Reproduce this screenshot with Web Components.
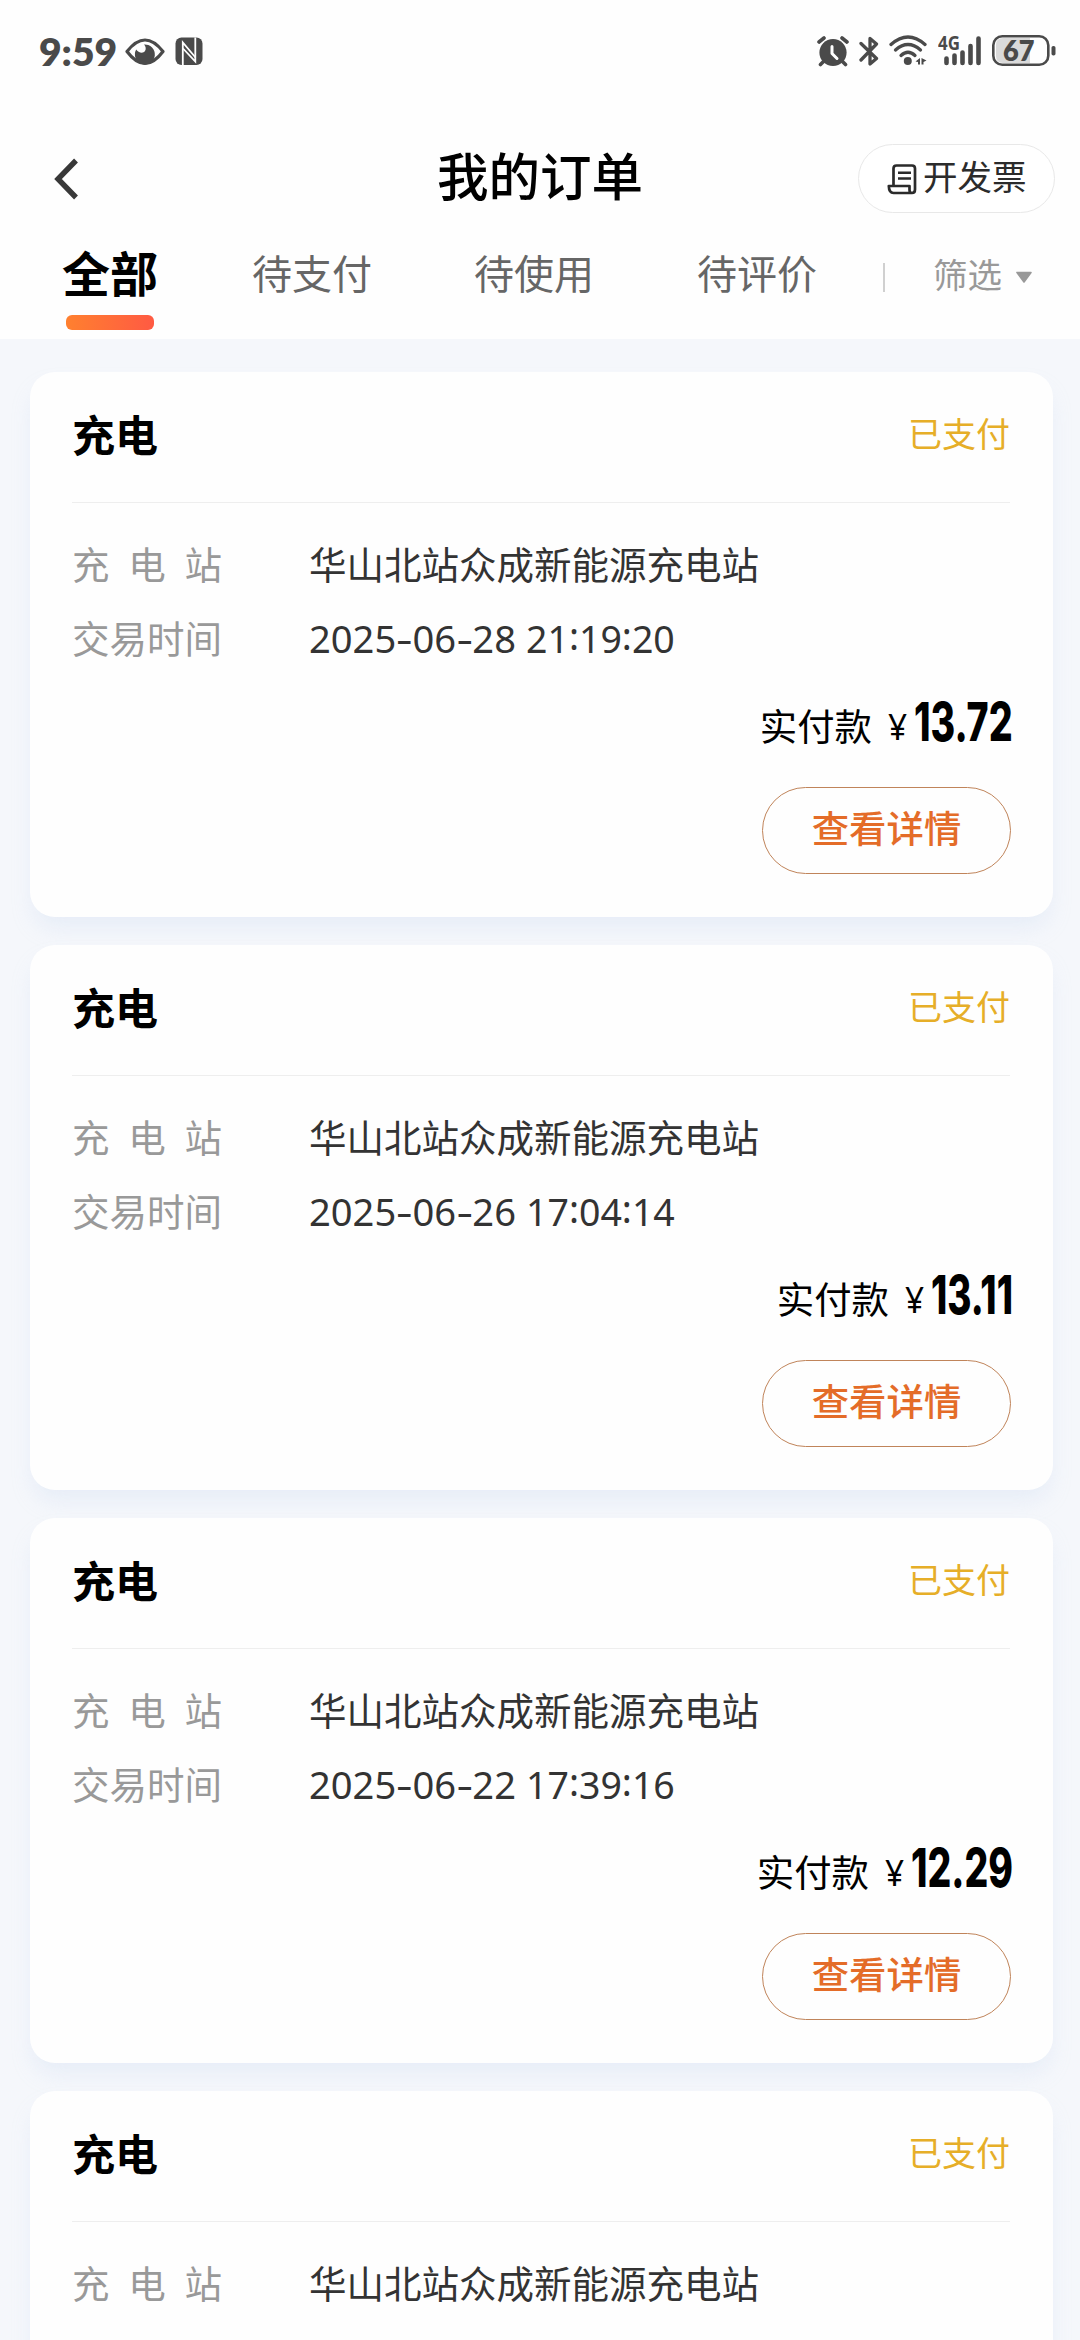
<!DOCTYPE html>
<html lang="zh-CN">
<head>
<meta charset="utf-8">
<title>我的订单</title>
<style>
html,body{margin:0;padding:0}
body{width:1080px;height:2340px;overflow:hidden;background:#f5f7fb;font-family:"Noto Sans","Noto Sans CJK SC",sans-serif}
</style>
</head>
<body>
<orders-page></orders-page>
<script>
const define = (name, html, setup) => {
  const t = document.createElement('template');
  t.innerHTML = html;
  customElements.define(name, class extends HTMLElement {
    connectedCallback() {
      if (this.shadowRoot) return;
      this.attachShadow({mode: 'open'}).append(t.content.cloneNode(true));
      if (setup) setup.call(this, this.shadowRoot);
    }
  });
};

/* Condenses or widens its text to the width given in the "w" attribute. */
define('fit-text', `
<style>:host{display:block;white-space:nowrap;flex:none}span{display:inline-block;transform-origin:0 50%}</style>
<span><slot></slot></span>`, function (root) {
  const span = root.querySelector('span'), w = +this.getAttribute('w');
  this.style.width = w + 'px';
  span.style.transform = `scaleX(${w / span.offsetWidth})`;
});

define('status-bar', `
<style>
:host{display:flex;height:100px;color:#4a4a4a;align-items:flex-start;box-sizing:border-box;padding:32px 23px 0 39px}
svg{display:block;flex:none}
.time{font:800 38px/38px Lato,sans-serif;height:38px}
.time b{font-weight:inherit;vertical-align:3px;line-height:1}
.eye{margin-left:8px}.nfc{margin-left:10px}
.right{margin-left:auto;display:flex}
.sig{display:grid}.sig>*{grid-area:1/1}
.g{font:700 20px/20px "Noto Sans",sans-serif;padding-top:1px}
.bat{display:grid}.bat>*{grid-area:1/1}
.num{font:800 28px/36px Lato,sans-serif;padding-left:12px}
</style>
<fit-text class="time" w="78">9:59</fit-text>
<svg class="eye" width="40" height="38" viewBox="0 0 40 38"><path d="M2 19.500Q20-3.500 38 19.500Q20 43.500 2 19.500Z" fill="none" stroke="currentColor" stroke-width="3.200" stroke-linejoin="round"/><path d="M19 12.500A10 10 0 1 1 11.200 17.500C13 20.500 18 22 20 19C21.500 16.500 20.500 14 19 12.500Z" fill="currentColor"/></svg>
<svg class="nfc" width="28" height="38" viewBox="0 0 28 38"><rect x=".5" y="5.500" width="27" height="27.500" rx="6" fill="currentColor"/><path d="M7.800 33V10.500L20.500 25.500" fill="none" stroke="#fff" stroke-width="1.800"/><path d="M20.300 5.500V29.500L8 16.500" fill="none" stroke="#fff" stroke-width="1.800"/></svg>
<div class="right">
<svg width="32" height="38" viewBox="0 0 32 38"><circle cx="16" cy="20.500" r="13.600" fill="currentColor"/><path d="M2 10L7 6M30 10L25 6M6.500 29.500L3.500 32.500M25.500 29.500L28.500 32.500" stroke="currentColor" stroke-width="3.600" stroke-linecap="round"/><path d="M15 14.500V21.500L20 26.500" fill="none" stroke="#fff" stroke-width="3" stroke-linecap="round" stroke-linejoin="round"/></svg>
<svg style="margin-left:10px" width="20" height="38" viewBox="0 0 20 38"><path d="M2 11.500L17.500 26.500L11 32V6.500L17.500 12L2 28" fill="none" stroke="currentColor" stroke-width="3.300" stroke-linecap="round" stroke-linejoin="round"/></svg>
<svg style="margin-left:10px" width="40" height="38" viewBox="0 0 40 38"><g fill="none" stroke="currentColor" stroke-width="3.300" stroke-linecap="round"><path d="M2 12.500Q19 -2.500 36 12.500"/><path d="M6.500 18Q19 7 31.500 18"/><path d="M12 23.500Q19 17 26 23.500"/></g><circle cx="18.800" cy="29" r="4" fill="currentColor"/><path d="M26.500 29.500L31 26V32.500H29V30ZM32.500 26L37.500 28.500L34.500 30V32.500H32.500Z" fill="currentColor"/></svg>
<div class="sig" style="margin-left:9px">
<svg width="44" height="38" viewBox="0 0 44 38"><path d="M8.500 26.500V31M16.500 23.500V31M24.500 20.500V31M32.500 14V31M40.500 6.500V31" stroke="currentColor" stroke-width="4.600" stroke-linecap="round"/></svg>
<fit-text class="g" w="22">4G</fit-text></div>
<div class="bat" style="margin-left:9px">
<svg width="66" height="38" viewBox="0 0 66 38"><path d="M12 6H39V31H12Q5 31 5 24V13Q5 6 12 6Z" fill="#dadada"/><rect x="2.300" y="4.300" width="55" height="28.500" rx="9" fill="none" stroke="currentColor" stroke-width="2.600"/><rect x="60.500" y="14" width="4" height="9.500" rx="1.800" fill="currentColor"/></svg>
<fit-text class="num" w="31">67</fit-text></div>
</div>`);

define('invoice-button', `
<style>
:host{display:flex;box-sizing:border-box;width:197px;height:69px;border:1px solid #e8e8e8;border-radius:35px;align-items:center;padding-left:28px;color:#2b2b2b;background:#fff;font-size:34.500px;line-height:50px}
svg{display:block;margin-right:6px}
span{display:block;margin-top:-4px}
</style>
<svg width="30" height="32" viewBox="0 0 30 32"><path d="M6.500 22V5.500Q6.500 2.500 9.500 2.500H25Q28 2.500 28 5.500V26.500Q28 30 25 30H6.500Q2 30 1.800 23H22.500V27Q22.500 30 25 30" fill="none" stroke="currentColor" stroke-width="2.700" stroke-linejoin="round"/><path d="M11 9.700H24M11 15.500H24" stroke="currentColor" stroke-width="2.500"/></svg>
<span><slot></slot></span>`);

define('title-bar', `
<style>
:host{display:grid;grid-template-columns:1fr auto 1fr;height:138px;align-items:start;padding:0 26px}
svg{display:block;margin:56px 0 0 26px}
h1{margin:36px 0 0;font-size:51.500px;font-weight:500;line-height:76px;color:#000;font-family:"Noto Sans CJK SC",sans-serif}
invoice-button{justify-self:end;margin:44px -1px 0 0}
</style>
<svg width="30" height="46" viewBox="0 0 30 46"><path d="M24 4.500L6 23L24 41.500" fill="none" stroke="#383838" stroke-width="5.400"/></svg>
<h1><slot></slot></h1>
<invoice-button>开发票</invoice-button>`);

define('tab-bar', `
<style>
:host{display:flex;height:101px;font-size:40px;line-height:60px;color:#666;box-sizing:border-box;padding-left:62px;font-family:"Noto Sans CJK SC",sans-serif}
div{display:flex;flex-direction:column;align-items:center}
.on{font-size:48px;font-weight:700;color:#000;line-height:72px}
.on span{margin-top:-3px}
i{display:block;width:88px;height:15px;border-radius:6px;background:linear-gradient(90deg,#ff802f,#ff5a43);margin-top:8px}
.t{padding-top:4px}
.sep{width:2px;height:29px;background:#d0d0d0;margin-top:25px}
.f{font-size:34.500px;color:#999;padding-top:5px}
svg{display:block;margin:33px 0 0 13px}
</style>
<div class="on"><span>全部</span><i></i></div>
<span class="t" style="margin-left:94px">待支付</span>
<span class="t" style="margin-left:102px">待使用</span>
<span class="t" style="margin-left:103px">待评价</span>
<span class="sep" style="margin-left:66px"></span>
<span class="f" style="margin-left:48px">筛选</span>
<svg width="18" height="13" viewBox="0 0 18 13"><path d="M2 1.500H16L9 11Z" fill="#999" stroke="#999" stroke-width="1.600" stroke-linejoin="round"/></svg>`);

define('info-row', `
<style>
:host{display:flex;height:74px;align-items:center;font-size:37.500px;line-height:56px;margin-top:-1px;margin-bottom:1px}
.l{width:150px;color:#999;display:flex;justify-content:space-between;margin-right:87px}
.v{color:#333;display:flex}
</style>
<div class="l"></div><div class="v"><slot></slot></div>`, function (root) {
  for (const c of this.getAttribute('label')) {
    const s = document.createElement('span');
    s.textContent = c;
    root.querySelector('.l').append(s);
  }
});

define('date-time', `
<style>
:host{display:flex;font:400 38.500px/56px "Noto Sans",sans-serif;gap:10px;margin-top:-2px}
b{font-weight:400;vertical-align:3px;line-height:1}
u{text-decoration:none;display:inline-block;transform:scaleX(1.350);margin:0 2px}
</style>
<fit-text class="d" w="207"></fit-text><fit-text class="t" w="149"></fit-text>`, function (root) {
  const [d, t] = this.getAttribute('value').split(' ');
  const fill = (sel, html) => {
    const old = root.querySelector(sel), el = document.createElement('fit-text');
    el.setAttribute('w', old.getAttribute('w'));
    el.innerHTML = html;
    old.replaceWith(el);
  };
  fill('.d', d.replace(/-/g, '<u>-</u>'));
  fill('.t', t.replace(/:/g, '<b>:</b>'));
});

define('pay-row', `
<style>
:host{display:flex;justify-content:flex-end;align-items:flex-start;height:110px;color:#000;font-size:37.400px;line-height:56px}
.k{padding-top:22px}
.y{font:400 37px/56px "Noto Sans",sans-serif;margin:21px 0 0 16px}
.n{font:800 53.500px/64px Inter,sans-serif;margin:13px -3px 0 7px}
</style>
<span class="k">实付款</span><fit-text class="y" w="19">¥</fit-text>`, function (root) {
  const n = document.createElement('fit-text');
  n.className = 'n';
  n.setAttribute('w', this.getAttribute('w'));
  n.textContent = this.getAttribute('amount');
  root.append(n);
});

define('detail-button', `
<style>
:host{display:flex;box-sizing:border-box;width:249px;height:87px;border:1px solid #c0845a;border-radius:44px;align-items:flex-start;justify-content:center;align-self:flex-end;color:#e46c28;font:500 37.400px/56px "Noto Sans CJK SC",sans-serif;padding-top:11px;margin-right:-1px}
</style><slot></slot>`);

define('order-card', `
<style>
:host{display:flex;flex-direction:column;box-sizing:border-box;height:545px;margin:0 27px 28px 30px;padding:0 43px 0 42px;border-radius:25px;background:#fefefe;box-shadow:0 14px 22px -4px rgba(190,210,240,.26);flex:none}
header{display:flex;justify-content:space-between;height:130px;border-bottom:1px solid #eee;margin-bottom:26px;font-family:"Noto Sans CJK SC",sans-serif}
h2{margin:0;font-size:43px;line-height:64px;padding-top:29px;color:#000}
em{font-style:normal;font-size:34px;line-height:50px;padding-top:36px;color:#e6ae28}
</style>
<header><h2>充电</h2><em>已支付</em></header>
<slot></slot>`);

define('orders-page', `
<style>
:host{display:flex;flex-direction:column;width:1080px;height:2340px;overflow:hidden}
.top{background:#fefefe;height:339px;flex:none}
main{display:flex;flex-direction:column;padding-top:33px;flex:1;min-height:0;overflow:hidden}
</style>
<div class="top"><status-bar></status-bar><title-bar>我的订单</title-bar><tab-bar></tab-bar></div>
<main></main>`, function (root) {
  root.querySelector('main').innerHTML = [
    ['2025-06-28 21:19:20', '13.72', 99],
    ['2025-06-26 17:04:14', '13.11', 82],
    ['2025-06-22 17:39:16', '12.29', 102],
    null
  ].map(o => `<order-card><info-row label="充电站">华山北站众成新能源充电站</info-row>` + (o ? `
    <info-row label="交易时间"><date-time value="${o[0]}"></date-time></info-row>
    <pay-row amount="${o[1]}" w="${o[2]}"></pay-row>
    <detail-button>查看详情</detail-button>` : '') + `</order-card>`).join('');
});
</script>
</body>
</html>
